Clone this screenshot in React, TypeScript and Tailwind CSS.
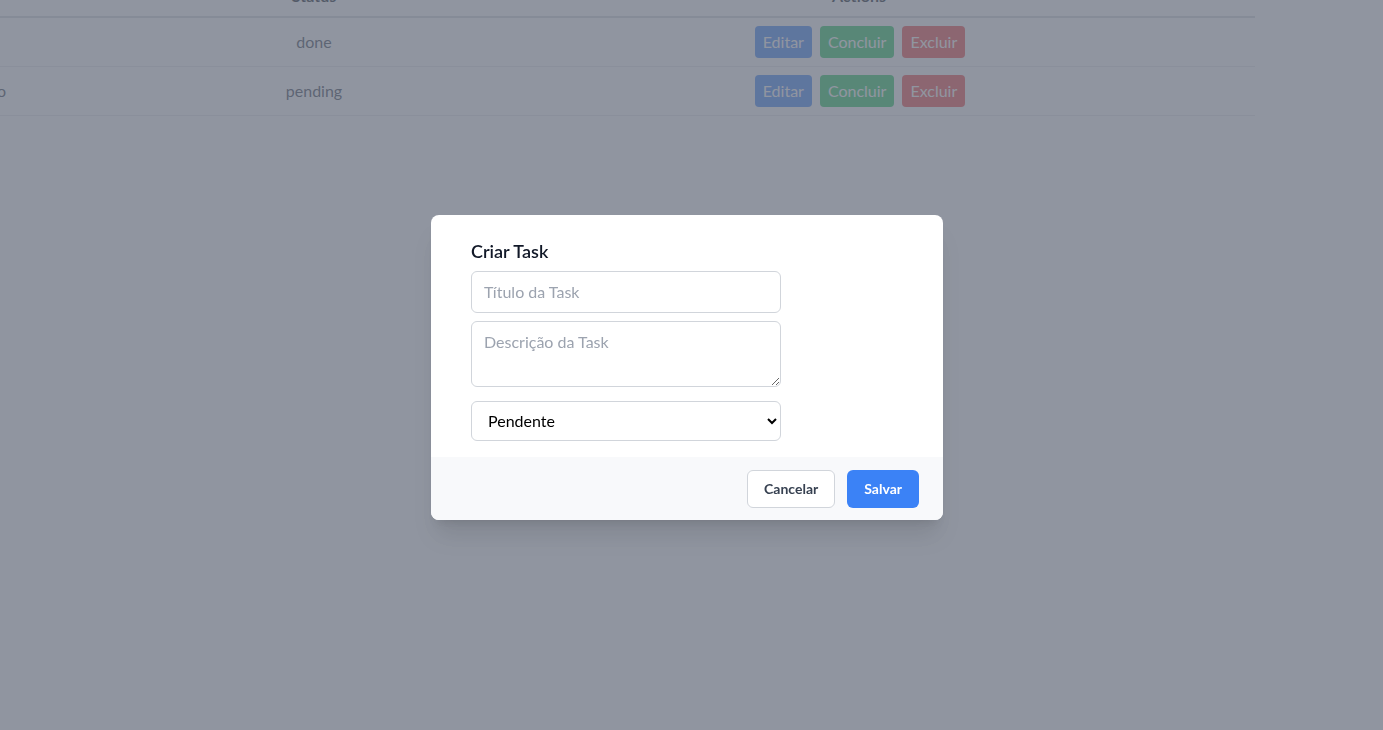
const tasks = [
  { title: "Estudar React", description: "Revisar hooks", status: "done" },
  { title: "Projeto final", description: "Finalizar layout do projeto", status: "pending" },
]

function RowActions() {
  return (
    <div className="flex justify-center gap-2 pl-[2px]">
      <button className="rounded bg-[#3b82f6] px-2 py-1 text-base text-white">Editar</button>
      <button className="rounded bg-[#22c55e] px-2 py-1 text-base text-white">Concluir</button>
      <button className="rounded bg-[#ef4444] px-2 py-1 text-base text-white">Excluir</button>
    </div>
  )
}

export default function App() {
  return (
    <div className="relative h-[730px] overflow-hidden bg-white font-['Lato','Noto_Sans',sans-serif]">
      {/* page is scrolled: table sits partly above and left of the viewport */}
      <div className="-ml-[635px] -mt-[24px] w-[1890px]">
        <table className="w-full table-fixed border-collapse text-base text-[#374151]">
          <thead>
            <tr className="border-b-2 border-[#d1d5db]">
              <th className="w-[300px] py-2 font-bold text-[#111827]">Título</th>
              <th className="w-[500px] py-2 font-bold text-[#111827]">Descrição</th>
              <th className="w-[298px] py-2 font-bold text-[#111827]">Status</th>
              <th className="py-2 font-bold text-[#111827]">Actions</th>
            </tr>
          </thead>
          <tbody>
            {tasks.map((t) => (
              <tr key={t.title} className="border-b border-[#e5e7eb]">
                <td className="py-2 text-center">{t.title}</td>
                <td className="py-2 text-center">{t.description}</td>
                <td className="py-2 text-center">{t.status}</td>
                <td className="py-2">
                  <RowActions />
                </td>
              </tr>
            ))}
          </tbody>
        </table>
      </div>

      <div className="fixed inset-0 bg-[#6b7280]/75" />

      <div className="fixed inset-0 flex items-center justify-center pr-[9px] pt-[4px]">
        <div className="w-[512px] overflow-hidden rounded-lg bg-white shadow-xl">
          <div className="px-6 pb-4 pt-6">
            <div className="ml-4">
              <h3 className="text-lg font-semibold leading-6 text-[#111827]">Criar Task</h3>
              <input
                className="mt-2 block w-[310px] rounded-md border border-[#d1d5db] px-3 py-2 text-base text-[#111827] placeholder:text-[#9ca3af]"
                placeholder="Título da Task"
              />
              <textarea
                rows={2}
                className="mt-2 block h-[66px] w-[310px] rounded-md border border-[#d1d5db] px-3 py-2 text-base text-[#111827] placeholder:text-[#9ca3af]"
                placeholder="Descrição da Task"
              />
              <select
                defaultValue="pending"
                className="mt-[14px] block h-10 w-[310px] rounded-md border border-[#d1d5db] bg-white px-3 text-base text-black"
              >
                <option value="pending">Pendente</option>
                <option value="done">Concluída</option>
              </select>
            </div>
          </div>
          <div className="flex flex-row-reverse bg-[#f8f9fb] px-6 pb-3 pt-[13px]">
            <button className="ml-3 rounded-md bg-[#3b82f6] px-[17px] py-2 text-sm font-bold text-white">Salvar</button>
            <button className="rounded-md border border-[#d1d5db] bg-white px-4 py-2 text-sm font-bold text-[#374151]">
              Cancelar
            </button>
          </div>
        </div>
      </div>
    </div>
  )
}
